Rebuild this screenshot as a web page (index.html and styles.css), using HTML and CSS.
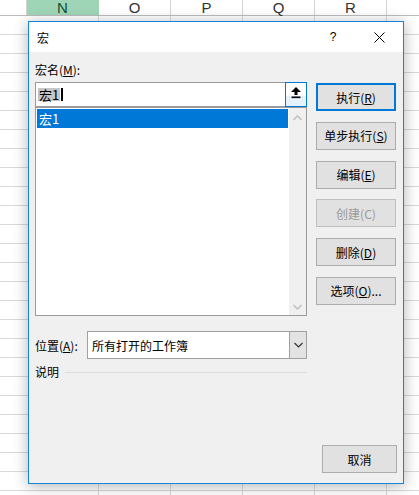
FILE: index.html
```html
<!DOCTYPE html>
<html lang="zh-CN">
<head>
    <meta charset="UTF-8">
    <meta name="viewport" content="width=device-width, initial-scale=1.0">
    <title>宏</title>
    <link rel="stylesheet" href="styles.css">
</head>
<body>
    <div class="sheet">
        <div class="col-heads">
            <div class="col-head edge"></div>
            <div class="col-head active">N</div>
            <div class="col-head">O</div>
            <div class="col-head">P</div>
            <div class="col-head">Q</div>
            <div class="col-head">R</div>
            <div class="col-head tail"></div>
        </div>
        <div class="cells"></div>
    </div>

    <div class="dialog">
        <div class="titlebar">
            <span class="title">宏</span>
            <span class="help">?</span>
            <span class="close">
                <svg width="11" height="11" viewBox="0 0 11 11">
                    <path d="M0.5 0.5 L10.5 10.5 M10.5 0.5 L0.5 10.5" stroke="#000" stroke-width="1" fill="none"/>
                </svg>
            </span>
        </div>
        <div class="dialog-body">
            <div class="main-row">
                <div class="left-col">
                    <div class="field-label">宏名(<u>M</u>):</div>
                    <div class="name-box">
                        <span class="name-text"><span class="sel">宏1</span><span class="caret"></span></span>
                        <span class="pick">
                            <svg width="10" height="12" viewBox="0 0 10 12">
                                <path d="M5 0 L10 5 L6.5 5 L6.5 8 L3.5 8 L3.5 5 L0 5 Z" fill="#000"/>
                                <rect x="0.5" y="9.5" width="9" height="1.6" fill="#000"/>
                            </svg>
                        </span>
                    </div>
                    <div class="macro-list">
                        <div class="list-items">
                            <div class="list-item selected">宏1</div>
                        </div>
                        <div class="scrollbar">
                            <svg width="9" height="6" viewBox="0 0 9 6">
                                <path d="M0.5 5 L4.5 1 L8.5 5" stroke="#c2c2c2" stroke-width="1.6" fill="none"/>
                            </svg>
                            <svg width="9" height="6" viewBox="0 0 9 6">
                                <path d="M0.5 1 L4.5 5 L8.5 1" stroke="#c2c2c2" stroke-width="1.6" fill="none"/>
                            </svg>
                        </div>
                    </div>
                    <div class="where-row">
                        <span class="where-label">位置(<u>A</u>):</span>
                        <div class="combo">
                            <span class="combo-text">所有打开的工作簿</span>
                            <span class="combo-btn">
                                <svg width="9" height="6" viewBox="0 0 9 6">
                                    <path d="M0.5 1 L4.5 5 L8.5 1" stroke="#333" stroke-width="1.2" fill="none"/>
                                </svg>
                            </span>
                        </div>
                    </div>
                    <div class="desc-row">
                        <span>说明</span>
                        <span class="rule"></span>
                    </div>
                </div>
                <div class="btn-col">
                    <button class="btn default">执行(<u>R</u>)</button>
                    <button class="btn">单步执行(<u>S</u>)</button>
                    <button class="btn">编辑(<u>E</u>)</button>
                    <button class="btn" disabled>创建(C)</button>
                    <button class="btn">删除(<u>D</u>)</button>
                    <button class="btn">选项(<u>O</u>)...</button>
                </div>
            </div>
            <div class="footer">
                <button class="btn cancel">取消</button>
            </div>
        </div>
    </div>
</body>
</html>
```

FILE: styles.css
```css
*{
    margin: 0;
    padding: 0;
    box-sizing: border-box;
}

body{
    width: 419px;
    height: 495px;
    overflow: hidden;
    background-color: #fff;
    font-family: "Noto Sans CJK SC", "Noto Sans", sans-serif;
    font-size: 12px;
    color: #000;
    position: relative;
}

/* spreadsheet behind the dialog */
.sheet{
    height: 100%;
    display: flex;
    flex-direction: column;
}

.col-heads{
    display: flex;
    height: 16px;
    border-bottom: 1px solid #bcbcbc;
    background-color: #fff;
}

.col-head{
    width: 72px;
    flex-shrink: 0;
    border-right: 1px solid #d4d4d4;
    display: flex;
    align-items: center;
    justify-content: center;
    font-family: "Liberation Sans", sans-serif;
    font-size: 15px;
    line-height: 15px;
    color: #333;
}

.col-head.edge{
    width: 27px;
}

.col-head.tail{
    width: 32px;
    border-right: none;
}

.col-head.active{
    background-color: #9fd5b7;
    color: #0f4f2f;
    border-right-color: #9fd5b7;
}

.cells{
    flex: 1;
    background-image:
        repeating-linear-gradient(to bottom, transparent 0 18px, #d9d9d9 18px 19px),
        repeating-linear-gradient(to right, transparent 0 71px, #d9d9d9 71px 72px);
    background-position: 0 0, 27px 0;
}

/* the macro dialog */
.dialog{
    position: absolute;
    left: 28px;
    top: 21px;
    width: 376px;
    height: 463px;
    border: 1px solid #1883d7;
    background-color: #f0f0f0;
    box-shadow: 0 2px 14px rgba(0,0,0,0.3);
    display: flex;
    flex-direction: column;
}

.titlebar{
    height: 30px;
    background-color: #fff;
    display: flex;
    align-items: center;
    padding-left: 8px;
}

.title{
    flex: 1;
    font-size: 12px;
}

.help{
    font-family: "Liberation Sans", sans-serif;
    font-size: 12px;
    width: 12px;
    text-align: center;
    margin-right: 35px;
}

.close{
    display: flex;
    margin-right: 18px;
}

.dialog-body{
    flex: 1;
    display: flex;
    flex-direction: column;
    padding: 10px 6px 10px 6px;
}

.main-row{
    display: flex;
    gap: 9px;
}

.left-col{
    width: 272px;
    display: flex;
    flex-direction: column;
}

.field-label{
    line-height: 16px;
    margin-bottom: 4px;
}

.name-box{
    height: 25px;
    border: 1px solid #9a9a9a;
    background-color: #fff;
    display: flex;
    align-items: center;
    justify-content: space-between;
}

.name-text{
    display: flex;
    align-items: center;
    padding-left: 2px;
}

.sel{
    background-color: #c6c6c6;
    line-height: 13px;
    padding: 0 1px;
    font-size: 13px;
}

.caret{
    width: 2px;
    height: 13px;
    margin-left: 1px;
    background-color: #000;
}

.pick{
    width: 22px;
    height: 25px;
    margin: -1px -1px -1px 0;
    border: 1px solid #0078d7;
    background: linear-gradient(to bottom, #fff 0 55%, #e5f1fb 55% 100%);
    display: flex;
    align-items: center;
    justify-content: center;
    padding-bottom: 3px;
}

.macro-list{
    height: 209px;
    border: 1px solid #9a9a9a;
    background-color: #fff;
    display: flex;
}

.list-items{
    flex: 1;
    padding: 1px;
}

.list-item{
    height: 19px;
    line-height: 19px;
    padding-left: 2px;
    font-size: 13px;
}

.list-item.selected{
    background-color: #0078d7;
    color: #fff;
}

.scrollbar{
    width: 17px;
    background-color: #f0f0f0;
    display: flex;
    flex-direction: column;
    justify-content: space-between;
    align-items: center;
    padding: 7px 0 5px;
}

.where-row{
    display: flex;
    align-items: center;
    margin-top: 15px;
}

.where-label{
    width: 52px;
}

.combo{
    flex: 1;
    height: 28px;
    border: 1px solid #a0a0a0;
    background-color: #fff;
    display: flex;
    align-items: center;
    justify-content: space-between;
}

.combo-text{
    padding-left: 4px;
}

.combo-btn{
    width: 18px;
    height: 28px;
    margin: -1px -1px -1px 0;
    border: 1px solid #a0a0a0;
    background-color: #e3e3e3;
    display: flex;
    align-items: center;
    justify-content: center;
}

.desc-row{
    display: flex;
    align-items: center;
    gap: 6px;
    margin-top: 5px;
    line-height: 16px;
}

.rule{
    flex: 1;
    height: 1px;
    background-color: #dcdcdc;
}

.btn-col{
    display: flex;
    flex-direction: column;
    gap: 10.8px;
    padding-top: 21px;
}

.btn{
    width: 80px;
    height: 28px;
    border: 1px solid #adadad;
    background-color: #e1e1e1;
    font-family: "Noto Sans CJK SC", "Noto Sans", sans-serif;
    font-size: 12px;
    color: #000;
}

.btn.default{
    border: 2px solid #0078d7;
}

.btn:disabled{
    color: #9a9a9a;
    border-color: #bfbfbf;
}

.footer{
    margin-top: auto;
    display: flex;
    justify-content: flex-end;
}

.btn.cancel{
    width: 75px;
}
```
